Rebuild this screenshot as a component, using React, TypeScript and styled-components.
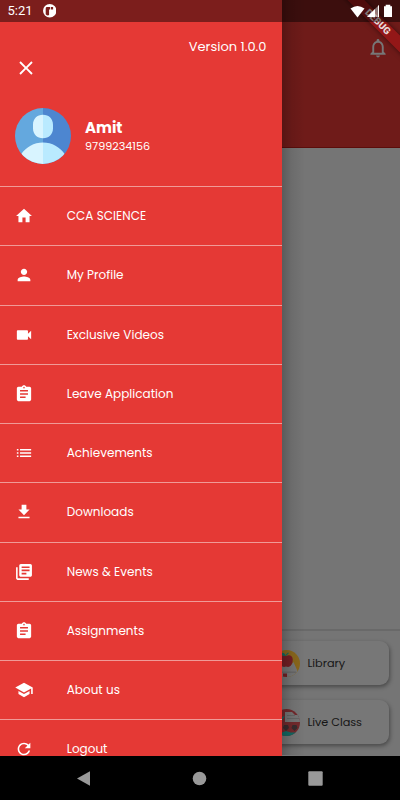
import React from 'react';
import styled, { createGlobalStyle } from 'styled-components';

const Global = createGlobalStyle`
  * { box-sizing: border-box; }
  body { margin: 0; background: #000; }
`;

const Screen = styled.div`
  position: relative;
  width: 400px;
  height: 800px;
  overflow: hidden;
  display: flex;
  flex-direction: column;
  background: #000;
  font-family: Poppins, Inter, sans-serif;
`;

const Page = styled.main`
  height: 756px;
  flex: none;
  display: flex;
  flex-direction: column;
  background: #757575;
`;

const PageHeader = styled.header`
  height: 148px;
  flex: none;
  display: flex;
  justify-content: flex-end;
  align-items: flex-start;
  padding: 36px 10px 0 0;
  background: #6f1b19;
  border-bottom: 1px solid #5c0d0b;
`;

const PageBody = styled.div`
  flex: 1;
`;

const Shortcuts = styled.section`
  height: 127px;
  border-top: 2px solid #696969;
  display: flex;
  flex-direction: column;
  align-items: flex-end;
  gap: 15px;
  padding: 10px 11px 0 0;
`;

const ShortcutCard = styled.div`
  width: 180px;
  height: 44px;
  flex: none;
  display: flex;
  align-items: center;
  gap: 7.5px;
  padding-left: 64px;
  border-radius: 9px;
  background: #777;
  box-shadow: 1px 2px 4px rgba(0, 0, 0, 0.38);
`;

const Label = styled.span<{ $size: number; $spacing?: number; $weight?: number; $color?: string }>`
  font-size: ${(p) => p.$size}px;
  letter-spacing: ${(p) => p.$spacing ?? 0}px;
  font-weight: ${(p) => p.$weight ?? 400};
  color: ${(p) => p.$color ?? '#fff'};
  line-height: 18px;
  white-space: nowrap;
`;

const Drawer = styled.aside`
  position: absolute;
  left: 0;
  top: 0;
  width: 281.5px;
  height: 755.5px;
  overflow: hidden;
  background: #e53935;
`;

const DrawerShade = styled.div`
  position: absolute;
  left: 281px;
  top: 0;
  width: 24px;
  height: 755px;
  background: linear-gradient(to right, rgba(0, 0, 0, 0.24), rgba(0, 0, 0, 0.08) 45%, transparent);
`;

const DrawerTop = styled.div`
  height: 186px;
  display: flex;
  flex-direction: column;
  padding: 38px 15px 0 14px;
`;

const TopBar = styled.div`
  height: 70px;
  display: flex;
  justify-content: space-between;
  align-items: flex-start;
`;

const CloseButton = styled.button`
  display: flex;
  margin: 18px 0 0;
  padding: 0;
  border: 0;
  background: none;
`;

const Profile = styled.div`
  display: flex;
  align-items: center;
  gap: 14.5px;
  padding-left: 0.5px;
`;

const ProfileText = styled.div`
  display: flex;
  flex-direction: column;
  padding-top: 2px;
`;

const Menu = styled.nav`
  display: flex;
  flex-direction: column;
`;

const MenuItem = styled.a`
  height: 59.25px;
  flex: none;
  display: flex;
  align-items: center;
  gap: 32.7px;
  padding-left: 14px;
  border-top: 1px solid #f09a97;
`;

const Glyph = styled.svg<{ $size: number; $color?: string }>`
  display: block;
  flex: none;
  width: ${(p) => p.$size}px;
  height: ${(p) => p.$size}px;
  fill: ${(p) => p.$color ?? '#fff'};
`;

const Banner = styled.div`
  position: absolute;
  left: 327.5px;
  top: 16px;
  width: 100px;
  height: 11.5px;
  transform: rotate(45deg);
  display: flex;
  align-items: center;
  justify-content: center;
  background: #931717;
  box-shadow: 0 0 5px rgba(0, 0, 0, 0.5);
  color: #e8dcdc;
  font: 900 9.8px/11px Roboto, sans-serif;
`;

const StatusBar = styled.div`
  position: absolute;
  left: 0;
  top: 0;
  width: 400px;
  height: 22px;
  display: flex;
  align-items: center;
  padding: 0 5px 0 7.5px;
  background: rgba(0, 0, 0, 0.46);
`;

const Clock = styled.span`
  width: 35px;
  color: #fff;
  font: 400 13px/22px Roboto, sans-serif;
`;

const StatusIcons = styled.div`
  display: flex;
  align-items: center;
  gap: 1px;
  margin-left: auto;
`;

const NavBar = styled.footer`
  height: 44px;
  display: flex;
  align-items: center;
  justify-content: center;
  gap: 101px;
  padding-right: 1px;
`;

const paths = {
  close: 'M19 6.41L17.59 5 12 10.59 6.41 5 5 6.41 10.59 12 5 17.59 6.41 19 12 13.41 17.59 19 19 17.59 13.41 12z',
  home: 'M10 20v-6h4v6h5v-8h3L12 3 2 12h3v8z',
  person: 'M12 12c2.21 0 4-1.79 4-4s-1.79-4-4-4-4 1.79-4 4 1.79 4 4 4zm0 2c-2.67 0-8 1.34-8 4v2h16v-2c0-2.66-5.33-4-8-4z',
  video: 'M17 10.5V7c0-.55-.45-1-1-1H4c-.55 0-1 .45-1 1v10c0 .55.45 1 1 1h12c.55 0 1-.45 1-1v-3.5l4 4v-11l-4 4z',
  assignment:
    'M19 3h-4.18C14.4 1.84 13.3 1 12 1c-1.3 0-2.4.84-2.82 2H5c-1.1 0-2 .9-2 2v14c0 1.1.9 2 2 2h14c1.1 0 2-.9 2-2V5c0-1.1-.9-2-2-2zm-7 0c.55 0 1 .45 1 1s-.45 1-1 1-1-.45-1-1 .45-1 1-1zm2 14H7v-2h7v2zm3-4H7v-2h10v2zm0-4H7V7h10v2z',
  list: 'M3 13h2v-2H3v2zm0 4h2v-2H3v2zm0-8h2V7H3v2zm4 4h14v-2H7v2zm0 4h14v-2H7v2zM7 7v2h14V7H7z',
  download: 'M19 9h-4V3H9v6H5l7 7 7-7zM5 18v2h14v-2H5z',
  books:
    'M4 6H2v14c0 1.1.9 2 2 2h14v-2H4V6zm16-4H8c-1.1 0-2 .9-2 2v12c0 1.1.9 2 2 2h12c1.1 0 2-.9 2-2V4c0-1.1-.9-2-2-2zm-1 9H9V9h10v2zm-4 4H9v-2h6v2zm4-8H9V5h10v2z',
  school: 'M5 13.18v4L12 21l7-3.82v-4L12 17l-7-3.82zM12 3L1 9l11 6 9-4.91V17h2V9L12 3z',
  refresh:
    'M17.65 6.35C16.2 4.9 14.21 4 12 4c-4.42 0-7.99 3.58-7.99 8s3.57 8 7.99 8c3.73 0 6.84-2.55 7.73-6h-2.08c-.82 2.33-3.04 4-5.65 4-3.31 0-6-2.69-6-6s2.69-6 6-6c1.66 0 3.14.69 4.22 1.78L13 11h7V4l-2.35 2.35z',
  bell: 'M12 22c1.1 0 2-.9 2-2h-4c0 1.1.9 2 2 2zm6-6v-5c0-3.07-1.63-5.64-4.5-6.32V4c0-.83-.67-1.5-1.5-1.5s-1.5.67-1.5 1.5v.68C7.64 5.36 6 7.92 6 11v5l-2 2v1h16v-1l-2-2zm-2 1H8v-6c0-2.48 1.51-4.5 4-4.5s4 2.02 4 4.5v6z',
};

type IconName = keyof typeof paths;

function Icon({ name, size = 20, color }: { name: IconName; size?: number; color?: string }) {
  return (
    <Glyph viewBox="-0.6 -0.6 25.2 25.2" $size={size} $color={color}>
      <path d={paths[name]} />
    </Glyph>
  );
}

const items: { icon: IconName; text: string; spacing: number }[] = [
  { icon: 'home', text: 'CCA SCIENCE', spacing: 0.03 },
  { icon: 'person', text: 'My Profile', spacing: 0.02 },
  { icon: 'video', text: 'Exclusive Videos', spacing: 0.02 },
  { icon: 'assignment', text: 'Leave Application', spacing: 0.02 },
  { icon: 'list', text: 'Achievements', spacing: 0.02 },
  { icon: 'download', text: 'Downloads', spacing: 0.02 },
  { icon: 'books', text: 'News & Events', spacing: 0.02 },
  { icon: 'assignment', text: 'Assignments', spacing: 0 },
  { icon: 'school', text: 'About us', spacing: 0.02 },
  { icon: 'refresh', text: 'Logout', spacing: 0.02 },
];

function Avatar() {
  return (
    <Glyph viewBox="0 0 56 56" $size={56}>
      <clipPath id="face"><circle cx="28" cy="28" r="28" /></clipPath>
      <g clipPath="url(#face)">
        <path fill="#64a8de" d="M0 0h28v56H0z" />
        <path fill="#4d86d0" d="M28 0h28v56H28z" />
        <path fill="#d8f4ff" d="M28 6.700c-6 0-10 4-10 10v3.500c0 6 4 10 10 10zM28 34.500c-9 0-17 4.500-22 12v10h22z" />
        <path fill="#b9eaff" d="M28 6.700c6 0 10 4 10 10v3.500c0 6-4 10-10 10zM28 34.500c9 0 17 4.500 22 12v10H28z" />
      </g>
    </Glyph>
  );
}

function LibraryPicture() {
  return (
    <Glyph viewBox="0 0 27 27" $size={27}>
      <clipPath id="lib"><circle cx="13.500" cy="13.500" r="13.500" /></clipPath>
      <g clipPath="url(#lib)">
        <path fill="#8b681c" d="M0 0h27v27H0z" />
        <path fill="#777" d="M4 16h13l3.500-4 4 9-3 6H4z" />
        <path fill="#696969" d="M3 21.500h20v1.500H3z" />
        <path fill="#741f25" d="M13 6c-4-2-7 0-7 4s3 7 5 7l2-.5 2 .5c3 0 5-4 4.700-8-.5-4-3.700-4.500-6.700-3zM10 23.500h4V27h-4z" />
        <path fill="#126b61" d="M13 6c-1-3-3-4-6-3 1 3 3 3 6 3zm0 0 3-3-1-.5-2 2z" />
      </g>
    </Glyph>
  );
}

function ClassPicture() {
  return (
    <Glyph viewBox="0 0 27 27" $size={27}>
      <clipPath id="cls"><circle cx="13.500" cy="13.500" r="13.500" /></clipPath>
      <g clipPath="url(#cls)">
        <path fill="#742a2d" d="M0 0h27v27H0z" />
        <path fill="#777" d="M12 3h7l3 3h5v7H12z" />
        <path fill="#666" d="M14 6h8v1h-8zM14 9h12v1H14z" />
        <path fill="#126b65" d="M5 5h4v3l3-1-3 4H5zM0 27v-3.500h9l4-1.500 5 1.500h9V27z" />
        <path fill="#382c2e" d="M11 16h4l1 3-3 3-3-3zM19.500 16h4l1 3-3 3-3-3z" />
      </g>
    </Glyph>
  );
}

export default function App() {
  return (
    <Screen>
      <Global />
      <Page>
        <PageHeader><Icon name="bell" size={24} color="#777" /></PageHeader>
        <PageBody />
        <Shortcuts>
          <ShortcutCard>
            <LibraryPicture />
            <Label $size={11.3} $spacing={-0.03} $color="#161616">Library</Label>
          </ShortcutCard>
          <ShortcutCard>
            <ClassPicture />
            <Label $size={11.3} $spacing={-0.05} $color="#161616">Live Class</Label>
          </ShortcutCard>
        </Shortcuts>
      </Page>
      <DrawerShade />
      <Drawer>
        <DrawerTop>
          <TopBar>
            <CloseButton aria-label="Close"><Icon name="close" size={24} /></CloseButton>
            <Label $size={13}>Version 1.0.0</Label>
          </TopBar>
          <Profile>
            <Avatar />
            <ProfileText>
              <Label $size={15} $weight={700}>Amit</Label>
              <Label $size={11.2}>9799234156</Label>
            </ProfileText>
          </Profile>
        </DrawerTop>
        <Menu>
          {items.map((it) => (
            <MenuItem key={it.text}>
              <Icon name={it.icon} />
              <Label $size={12} $spacing={it.spacing}>{it.text}</Label>
            </MenuItem>
          ))}
        </Menu>
      </Drawer>
      <Banner>DEBUG</Banner>
      <StatusBar>
        <Clock>5:21</Clock>
        <Glyph viewBox="0 0 14 14" $size={13.5}>
          <path fillRule="evenodd" d="M7 0a7 7 0 1 1 0 14A7 7 0 0 1 7 0zM3.800 3.200Q2.800 3.500 2.800 5v5.500Q4.500 12.500 6.300 11.500V5.800h1.200V3zM8.300 3v2.600h2.200V3z" />
        </Glyph>
        <StatusIcons>
          <Glyph viewBox="0 0 15 15" $size={15}><path d="M.5 4.500Q7.500-.5 14.500 4.500L7.500 13.500z" /></Glyph>
          <Glyph viewBox="0 0 14 14" $size={14}>
            <path d="M13 1v12H1z" opacity=".45" /><path d="M9 5v8H1z" /><path d="M13 1v12h-1V2z" />
          </Glyph>
          <Glyph viewBox="0 0 14 14" $size={14}><path d="M4.700.8h4.600v1.400H11V13H3V2.200h1.700z" /></Glyph>
        </StatusIcons>
      </StatusBar>
      <NavBar>
        <Glyph viewBox="0 0 15 15" $size={15} $color="#999"><path d="M14 .3v14.400L1 7.500z" /></Glyph>
        <Glyph viewBox="0 0 15 15" $size={15} $color="#999"><circle cx="7.500" cy="7.500" r="6.800" /></Glyph>
        <Glyph viewBox="0 0 15 15" $size={15} $color="#999"><rect x=".3" y=".3" width="14.400" height="14.400" rx="1" /></Glyph>
      </NavBar>
    </Screen>
  );
}
